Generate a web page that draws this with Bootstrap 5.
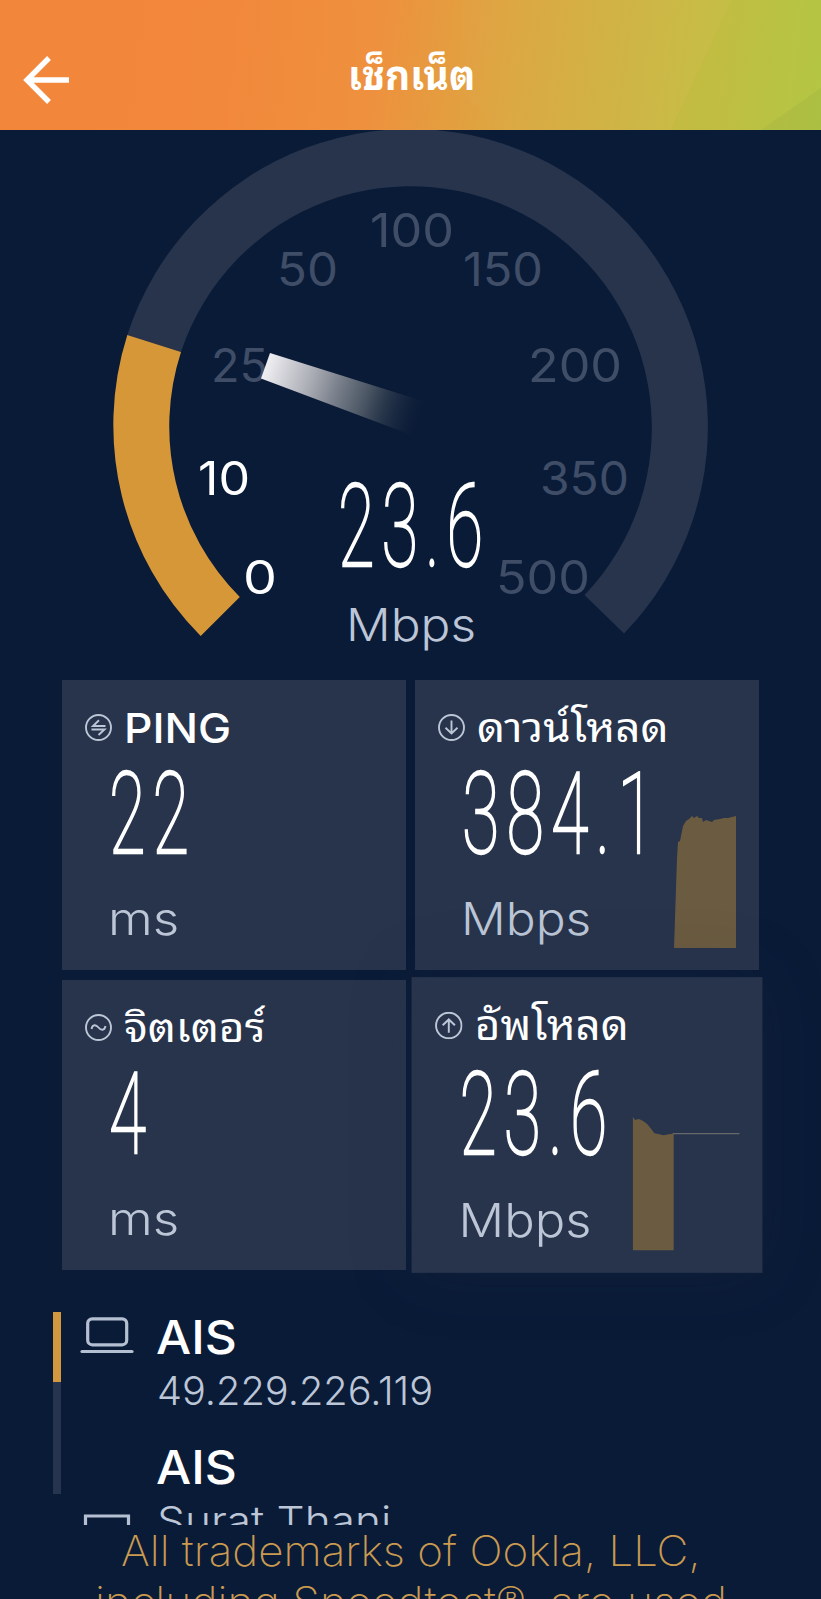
<!DOCTYPE html>
<html lang="th">
<head>
<meta charset="utf-8">
<meta name="viewport" content="width=device-width, initial-scale=1">
<title>เช็กเน็ต</title>
<link href="https://cdn.jsdelivr.net/npm/bootstrap@5.3.0/dist/css/bootstrap.min.css" rel="stylesheet">
<style>
  body { background: #0a1b38; color: #fff; font-family: Inter, "Noto Sans Thai Looped", "Noto Sans Thai", "Noto Sans", sans-serif; height: 1599px; overflow: hidden; }
  .topbar { height: 130px; background: linear-gradient(97deg, #f2863b 0%, #f2883b 28%, #ee913e 46%, #dca740 62%, #c9b943 82%, #b5c744 100%); }
  .facets { position: absolute; right: 0; top: 0; }
  .back { width: 47px; height: 48px; margin-left: 23px; margin-top: 56px; }
  .screen-title { position: absolute; left: 348px; top: 45px; font-size: 41px; line-height: 60px; font-weight: 700; }
  .gauge { height: 550px; }
  .gauge text { font-weight: 400; font-size: 46px; }
  .gauge .off { fill: #3f4d67; }
  .gauge .thin { font-family: Roboto, sans-serif; font-weight: 100; font-size: 115px; stroke: #fff; stroke-width: 2.3px; letter-spacing: 12px; }
  .gauge .unit-g { font-weight: 300; font-size: 45.5px; fill: #bcc6d6; }
  .tiles { display: grid; grid-template-columns: 344px 344px; grid-auto-rows: 290px; gap: 10px 9px; padding-left: 62px; }
  .tile { background: #27344c; padding: 17px 0 0 23px; position: relative; }
  .tile-up { transform: scale(1.02); box-shadow: 0 0 60px rgba(38, 48, 62, .22); }
  .tile-head { height: 60px; gap: 12px; }
  .tile-head svg { width: 27px; height: 27px; flex: none; }
  .tile-name { font-size: 41px; line-height: 60px; font-weight: 400; }
  .tile-name.latin { font-weight: 500; padding-top: 1px; }
  .fit { display: inline-block; white-space: pre; transform-origin: 0 50%; }
  .value-line { height: 90px; margin: 13px 0 0 24px; }
  .value-num { font-family: Roboto, sans-serif; font-weight: 100; font-size: 113.5px; line-height: 90px; letter-spacing: 12px; -webkit-text-stroke: 2.3px #fff; }
  .unit-line { height: 60px; margin: 29px 0 0 23px; }
  .unit-txt { font-size: 45.5px; line-height: 60px; font-weight: 300; color: #bcc6d6; }
  .spark { position: absolute; bottom: 22px; right: 22px; }
  .hosts { height: 255px; padding: 42px 0 0 53px; overflow: hidden; }
  .rail { width: 8px; height: 182px; background: linear-gradient(#d3993f 70px, #27344f 70px); flex: none; }
  .host-icon { width: 54px; margin-left: 19px; flex: none; }
  .host-text { margin: -4px 0 0 22px; }
  .host-name { height: 58px; font-size: 46px; line-height: 58px; font-weight: 500; }
  .host-second { margin-top: 22px; }
  .host-sub { height: 50px; font-size: 40px; line-height: 50px; font-weight: 300; color: #bcc6d6; margin-left: 1px; }
  .legal { font-size: 42px; line-height: 51px; font-weight: 200; color: #c99a50; padding-left: 121px; margin-top: 0; }
  .legal .second { margin-left: -26px; }
</style>
</head>
<body>
<header class="topbar position-relative">
  <svg class="facets" width="360" height="130" viewBox="0 0 360 130" aria-hidden="true">
    <path d="M0 90L35 130H210L270 0H0z" fill="#fff" fill-opacity=".02"/>
    <path d="M272 0L210 130H360V0z" fill="#a9c93f" fill-opacity=".1"/>
    <path d="M360 88L300 130H360z" fill="#7f9f4a" fill-opacity=".14"/>
  </svg>
  <div class="d-flex position-relative">
    <svg class="back" viewBox="0 0 47 48" fill="none" stroke="#fff" stroke-width="5.4"><path d="M46 24H5M26 2L4 24L26 46"/></svg>
  </div>
  <h1 class="screen-title m-0 fit" data-fit="127">เช็กเน็ต</h1>
</header>

<main>
  <svg class="gauge d-block w-100" viewBox="0 130 821 550">
    <defs>
      <linearGradient id="needle" gradientUnits="userSpaceOnUse" x1="265" y1="366" x2="420" y2="417">
        <stop offset="0" stop-color="#f0f0f4"/><stop offset=".3" stop-color="#a9abb3"/><stop offset=".65" stop-color="#56606c" stop-opacity=".85"/><stop offset="1" stop-color="#1c2b3c" stop-opacity="0"/>
      </linearGradient>
    </defs>
    <path d="M127.300 335A297.500 297.500 0 1 1 624 633.500L584.500 595A241.500 241.500 0 1 0 181 352z" fill="#27344c"/>
    <path d="M200.700 636A298 298 0 0 1 127.300 335L181 352A241.500 241.500 0 0 0 239.800 597z" fill="#d69739"/>
    <g>
      <text class="off" x="370" y="247" textLength="84" lengthAdjust="spacingAndGlyphs">100</text>
      <text class="off" x="277" y="286" textLength="61" lengthAdjust="spacingAndGlyphs">50</text>
      <text class="off" x="463" y="286" textLength="80" lengthAdjust="spacingAndGlyphs">150</text>
      <text class="off" x="211" y="382" textLength="57" lengthAdjust="spacingAndGlyphs">25</text>
      <text class="off" x="528" y="382" textLength="94" lengthAdjust="spacingAndGlyphs">200</text>
      <text class="off" x="540" y="495" textLength="89" lengthAdjust="spacingAndGlyphs">350</text>
      <text class="off" x="496" y="594" textLength="94" lengthAdjust="spacingAndGlyphs">500</text>
      <text x="198" y="495" textLength="52" lengthAdjust="spacingAndGlyphs" fill="#fff">10</text>
      <text x="243" y="594" textLength="34" lengthAdjust="spacingAndGlyphs" fill="#fff">0</text>
      <text class="thin" x="338" y="566" textLength="152" lengthAdjust="spacingAndGlyphs" fill="#fff">23.6</text>
      <text class="unit-g" x="346" y="641" textLength="130" lengthAdjust="spacingAndGlyphs">Mbps</text>
    </g>
    <path d="M270 353L426 402L414 436L261 378.500z" fill="url(#needle)"/>
  </svg>

  <section class="tiles">
    <article class="tile">
      <div class="tile-head d-flex align-items-center">
        <svg viewBox="0 0 27 27" fill="none" stroke="#bcc6d6" stroke-width="1.9"><circle cx="13.5" cy="13.5" r="12.5"/><path d="M20.5 12H8L14 6.200M6.500 15.500H19.500L13.500 21"/></svg>
        <span class="tile-name latin fit" data-fit="107">PING</span>
      </div>
      <div class="value-line"><span class="value-num fit" data-fit="87">22</span></div>
      <div class="unit-line"><span class="unit-txt fit" data-fit="71">ms</span></div>
    </article>

    <article class="tile">
      <div class="tile-head d-flex align-items-center">
        <svg viewBox="0 0 27 27" fill="none" stroke="#bcc6d6" stroke-width="1.9"><circle cx="13.5" cy="13.5" r="12.5"/><path d="M13.5 6.5V19.5M7.5 13.8L13.5 19.5L19.5 13.8"/></svg>
        <span class="tile-name fit" data-fit="192">ดาวน์โหลด</span>
      </div>
      <div class="value-line"><span class="value-num fit" data-fit="200">384.1</span></div>
      <div class="unit-line"><span class="unit-txt fit" data-fit="130">Mbps</span></div>
      <svg class="spark" width="63" height="132" viewBox="0 0 63 132"><path d="M0 132L3 42L4 26L6 25L9 10L12 5L15 3L18 0L20 2L23 0L25 2L28 2L29 6L32 4L38 6L40 4L46 3L50 2L54 2L58 1L62 0V132z" fill="#6b5b40"/></svg>
    </article>

    <article class="tile">
      <div class="tile-head d-flex align-items-center">
        <svg viewBox="0 0 27 27" fill="none" stroke="#bcc6d6" stroke-width="1.9"><circle cx="13.5" cy="13.5" r="12.5"/><path d="M6.5 15C7.5 10 11 10.500 13.500 13.500S19.500 17 20.500 12"/></svg>
        <span class="tile-name fit" data-fit="142">จิตเตอร์</span>
      </div>
      <div class="value-line"><span class="value-num fit" data-fit="44">4</span></div>
      <div class="unit-line"><span class="unit-txt fit" data-fit="71">ms</span></div>
    </article>

    <article class="tile tile-up">
      <div class="tile-head d-flex align-items-center">
        <svg viewBox="0 0 27 27" fill="none" stroke="#bcc6d6" stroke-width="1.9"><circle cx="13.500" cy="13.500" r="12.500"/><path d="M13.500 20.500V7.500M7.500 13.200L13.500 7.500L19.500 13.200"/></svg>
        <span class="tile-name fit" data-fit="151">อัพโหลด</span>
      </div>
      <div class="value-line"><span class="value-num fit" data-fit="152">23.6</span></div>
      <div class="unit-line"><span class="unit-txt fit" data-fit="130">Mbps</span></div>
      <svg class="spark" width="106" height="131" viewBox="0 0 106 131"><path d="M1 131V0L3 3L7 2L11 4L15 7L19 12L22 16L27 17L31 18L36 17L41 16.500V131z" fill="#6b5b40"/><path d="M40 16.500H105.500" stroke="#66686b" stroke-width="1.200"/></svg>
    </article>
  </section>

  <section class="hosts d-flex align-items-start">
    <div class="rail"></div>
    <div class="host-icon">
      <svg class="d-block" width="54" height="214" viewBox="0 0 54 214" fill="none" stroke="#b4bfd1" stroke-width="3.200"><rect x="7.700" y="6.800" width="39" height="26" rx="4.500"/><path d="M2 39.500H52" stroke-linecap="round"/><path d="M5.500 214V204H48.500V214"/></svg>
    </div>
    <div class="host-text">
      <div class="host-name"><span class="fit" data-fit="81">AIS</span></div>
      <div class="host-sub"><span class="fit" data-fit="276">49.229.226.119</span></div>
      <div class="host-name host-second"><span class="fit" data-fit="81">AIS</span></div>
      <div class="host-sub"><span class="fit" data-fit="234">Surat Thani</span></div>
    </div>
  </section>

  <footer class="legal">
    <div><span class="fit" data-fit="580">All trademarks of Ookla, LLC,</span></div>
    <div class="second"><span class="fit" data-fit="632">including Speedtest®, are used</span></div>
  </footer>
</main>
<script src="https://cdn.jsdelivr.net/npm/bootstrap@5.3.0/dist/js/bootstrap.bundle.min.js"></script>
<script>
  document.querySelectorAll('[data-fit]').forEach(function (el) {
    el.style.transform = 'scaleX(' + (el.dataset.fit / el.offsetWidth) + ')';
  });
</script>
</body>
</html>
